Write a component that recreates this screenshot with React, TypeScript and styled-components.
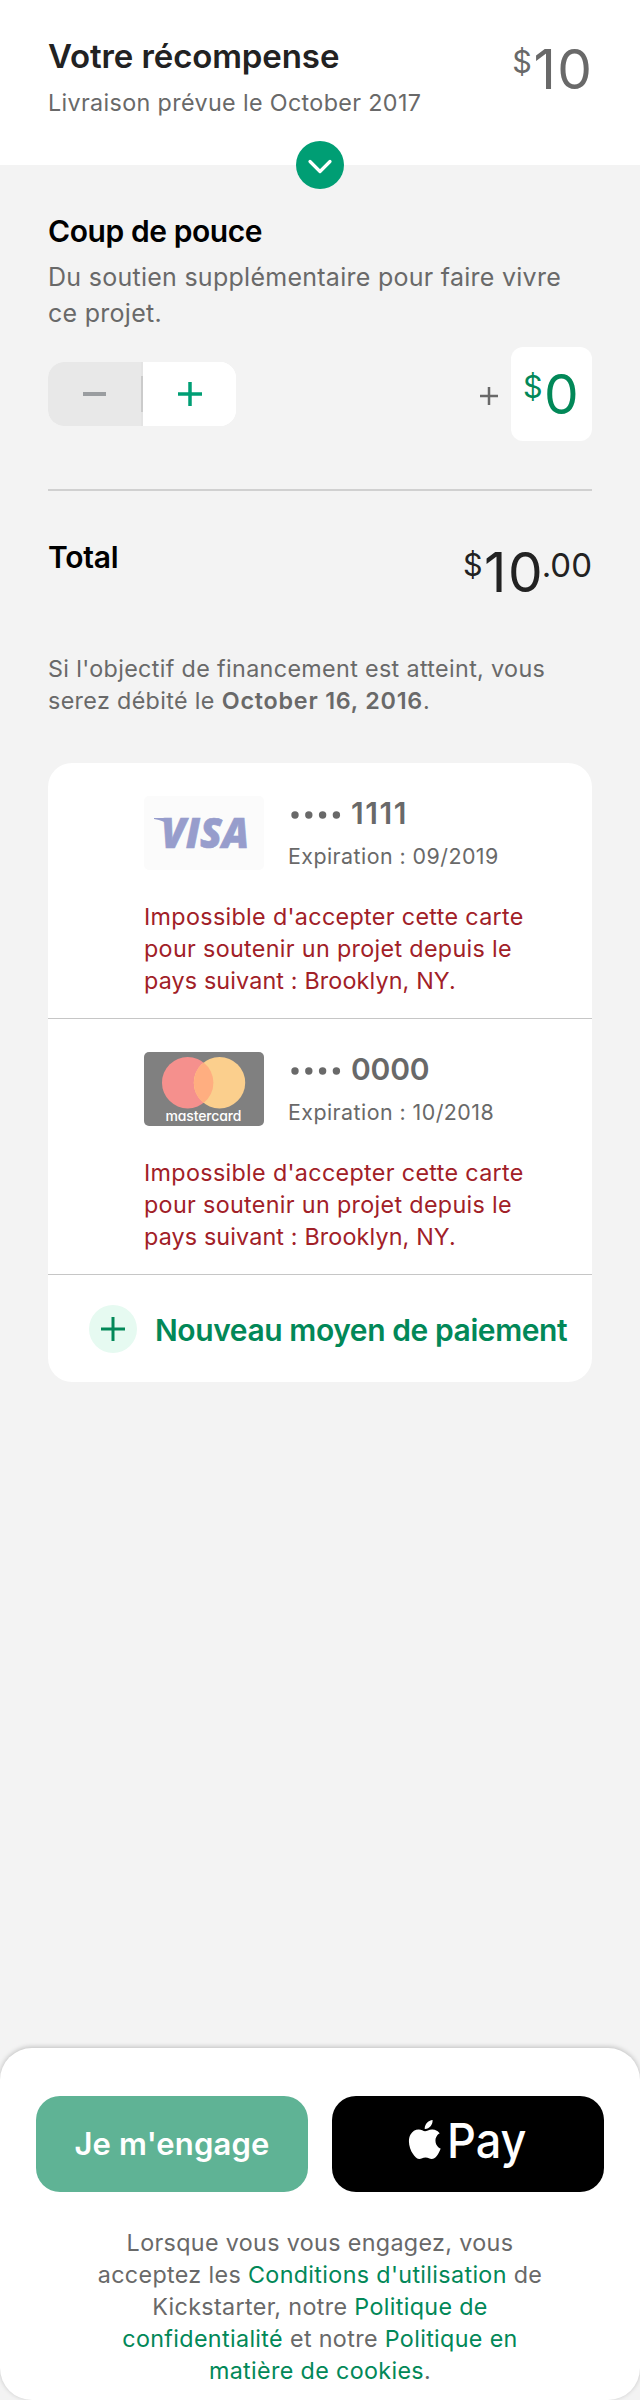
import React from 'react';
import styled, { createGlobalStyle } from 'styled-components';
import { SiApple } from 'react-icons/si';

const GlobalStyle = createGlobalStyle`
  * { box-sizing: border-box; }
  body { margin: 0; background: #f3f3f3; }
`;

const Page = styled.main`
  display: flex;
  flex-direction: column;
  width: 640px;
  height: 2400px;
  background: #f3f3f3;
  font-family: Inter, 'Liberation Sans', sans-serif;
  color: #696969;
`;

const Text = styled.p<{ $size: number; $line: number; $spacing?: number; $weight?: number; $color?: string }>`
  margin: 0;
  white-space: nowrap;
  font-size: ${(p) => p.$size}px;
  line-height: ${(p) => p.$line}px;
  letter-spacing: ${(p) => p.$spacing ?? 0}px;
  font-weight: ${(p) => p.$weight ?? 400};
  color: ${(p) => p.$color ?? '#696969'};
`;

const Header = styled.header`
  position: relative;
  display: flex;
  justify-content: space-between;
  height: 165px;
  padding: 36px 49px 0 48px;
  background: #fff;
`;

const HeaderText = styled.div`
  display: flex;
  flex-direction: column;
  gap: 13px;
`;

const Expand = styled.button`
  position: absolute;
  left: 296px;
  bottom: -24px;
  width: 48px;
  height: 48px;
  padding: 0;
  border: 0;
  border-radius: 50%;
  background: #009e74;
`;

const Amount = styled.div<{ $color: string; $top: number }>`
  display: flex;
  align-items: flex-start;
  padding-top: ${(p) => p.$top}px;
  color: ${(p) => p.$color};
`;

const Currency = styled.span`
  margin: 5px 1.5px 0 0;
  font-size: 30.5px;
  line-height: 30px;
`;

const Whole = styled.span`
  margin-right: -2.5px;
  font-size: 55px;
  line-height: 55px;
  letter-spacing: 1.5px;
`;

const Cents = styled.span`
  margin-top: 4px;
  font-size: 33px;
  line-height: 33px;
`;

const Body = styled.section`
  padding: 48px 48px 0;
`;

const Description = styled.div`
  padding: 10px 0 16px;
`;

const ControlRow = styled.div`
  display: flex;
  align-items: center;
  justify-content: space-between;
  height: 94px;
`;

const Stepper = styled.div`
  display: flex;
  width: 188px;
  height: 64px;
  border-radius: 16px;
  overflow: hidden;
  background: #fff;
`;

const StepButton = styled.button<{ $off?: boolean }>`
  display: flex;
  align-items: center;
  justify-content: center;
  flex: 1;
  padding: 0;
  border: 0;
  background: ${(p) => (p.$off ? '#e8e8e8' : '#fff')};
`;

const StepDivider = styled.span`
  align-self: center;
  width: 2px;
  height: 36px;
  background: #cbcbcb;
  box-shadow: 0 -36px #e4e4e4, 0 36px #e4e4e4;
`;

const Bonus = styled.div`
  display: flex;
  align-items: center;
  gap: 13px;
`;

const PlusSign = styled.span`
  display: flex;
  padding-top: 4px;
`;

const BonusBox = styled.div`
  width: 81px;
  height: 94px;
  padding-left: 12px;
  border-radius: 12px;
  background: #fff;
`;

const Rule = styled.hr`
  height: 2px;
  margin: 48px 0;
  border: 0;
  background: #d0d0d0;
`;

const TotalRow = styled.div`
  display: flex;
  justify-content: space-between;
  height: 114px;
`;

const ChargeDate = styled.strong`
  font-weight: 600;
  letter-spacing: 0.8px;
`;

const Cards = styled.div`
  height: 619px;
  margin-top: 46px;
  border-radius: 24px;
  overflow: hidden;
  background: #fff;
`;

const CardRow = styled.article`
  height: 256px;
  padding: 33px 0 0 96px;
  border-bottom: 1px solid #c6c6c6;
`;

const CardHead = styled.div`
  display: flex;
  gap: 24px;
  height: 74px;
  margin-bottom: 31px;
`;

const CardText = styled.div`
  display: flex;
  flex-direction: column;
  gap: 12px;
  margin-top: -1px;
`;

const CardNumber = styled.div`
  display: flex;
  align-items: center;
  gap: 10px;
  height: 36px;
  padding-left: 3px;
`;

const Dots = styled.svg`
  display: block;
  margin-top: 3px;
`;

const NewMethod = styled.button`
  display: flex;
  align-items: center;
  gap: 18px;
  width: 100%;
  height: 107px;
  padding: 0 0 0 41px;
  border: 0;
  background: transparent;
  font-family: inherit;
`;

const NewLabel = styled(Text)`
  padding-top: 3px;
`;

const AddBadge = styled.span`
  display: flex;
  align-items: center;
  justify-content: center;
  width: 48px;
  height: 48px;
  border-radius: 50%;
  background: #e6faf1;
`;

const Footer = styled.footer`
  height: 352px;
  margin-top: auto;
  padding: 48px 36px 0;
  border-radius: 32px;
  background: #fff;
  box-shadow: 0 -1px 5px rgba(0, 0, 0, 0.22);
`;

const Actions = styled.div`
  display: grid;
  grid-template-columns: 1fr 1fr;
  gap: 24px;
  margin-bottom: 35px;
`;

const Action = styled.button<{ $bg: string }>`
  display: flex;
  align-items: center;
  justify-content: center;
  height: 96px;
  padding: 0;
  border: 0;
  border-radius: 24px;
  color: #fff;
  background: ${(p) => p.$bg};
  font-family: inherit;
`;

const Legal = styled(Text)`
  text-align: center;
`;

const Link = styled.a`
  color: #028858;
`;

const Cross = ({ size, stroke, color }: { size: number; stroke: number; color: string }) => (
  <svg width={size} height={size} viewBox={`0 0 ${size} ${size}`} stroke={color} strokeWidth={stroke}>
    <path d={`M0 ${size / 2}H${size}M${size / 2} 0V${size}`} />
  </svg>
);

const Visa = () => (
  <svg width="120" height="74" viewBox="0 0 120 74">
    <rect width="120" height="74" rx="5" fill="#fbfbfb" />
    <path d="M10 22H24L26 31C22 26 17 24 10 23Z" fill="#979dcc" />
    <text x="17" y="52" fill="#979dcc" stroke="#979dcc" strokeWidth="0.6" fontFamily="'Open Sans', sans-serif" fontWeight="800" fontStyle="italic" fontSize="42.5" textLength="88" lengthAdjust="spacingAndGlyphs">VISA</text>
  </svg>
);

const Mastercard = () => (
  <svg width="120" height="74" viewBox="0 0 120 74">
    <rect width="120" height="74" rx="5" fill="#808080" />
    <circle cx="43.7" cy="30.7" r="25.7" fill="#f5908d" />
    <circle cx="75.5" cy="30.7" r="25.7" fill="#fbcf8d" />
    <path d="M59.6 10.5A25.7 25.7 0 0 1 59.6 50.9A25.7 25.7 0 0 1 59.6 10.5Z" fill="#ffae80" />
    <text x="21.5" y="69" fill="#fff" fontFamily="Inter, sans-serif" fontWeight="500" fontSize="14" textLength="76" style={{ fontFeatureSettings: "'cv11'" }}>mastercard</text>
  </svg>
);

const ApplePay = () => (
  <svg width="272" height="96" viewBox="0 0 272 96" fill="#fff">
    <SiApple x="73.3" y="24" size={39} />
    <text x="115" y="62.3" fontFamily="Inter, sans-serif" fontWeight="450" fontSize="48.5" textLength="79.5" lengthAdjust="spacingAndGlyphs">Pay</text>
  </svg>
);

type PaymentCardProps = { logo: React.ReactNode; digits: string; digitSpacing: number; expiry: string };

const PaymentCard = ({ logo, digits, digitSpacing, expiry }: PaymentCardProps) => (
  <CardRow>
    <CardHead>
      {logo}
      <CardText>
        <CardNumber>
          <Dots width="50" height="8" fill="#696969">
            {[4, 17.8, 31.6, 45.4].map((x) => <circle key={x} cx={x} cy="4" r="3.7" />)}
          </Dots>
          <Text as="span" $size={30} $line={36} $weight={600} $spacing={digitSpacing}>{digits}</Text>
        </CardNumber>
        <Text $size={21.4} $line={26} $spacing={0.45}>Expiration : {expiry}</Text>
      </CardText>
    </CardHead>
    <Text $size={23.3} $line={32} $spacing={0.34} $color="#a12027">
      Impossible d'accepter cette carte<br />pour soutenir un projet depuis le
    </Text>
    <Text $size={23.3} $line={32} $spacing={0.15} $color="#a12027">pays suivant : Brooklyn, NY.</Text>
  </CardRow>
);

export default function App() {
  return (
    <Page>
      <GlobalStyle />
      <Header>
        <HeaderText>
          <Text as="h1" $size={33} $line={40} $weight={600} $spacing={-0.1} $color="#222">Votre récompense</Text>
          <Text $size={23.3} $line={28} $spacing={0.36}>Livraison prévue le October 2017</Text>
        </HeaderText>
        <Amount $color="#696969" $top={6}><Currency>$</Currency><Whole>10</Whole></Amount>
        <Expand>
          <svg width="48" height="48" fill="none" stroke="#fff" strokeWidth="3.2" strokeLinecap="round" strokeLinejoin="round">
            <path d="M14 20.5L24 30.5L34 20.5" />
          </svg>
        </Expand>
      </Header>

      <Body>
        <Text as="h2" $size={30} $line={36} $weight={600} $spacing={-0.42} $color="#000">Coup de pouce</Text>
        <Description>
          <Text $size={25} $line={36} $spacing={0.27}>Du soutien supplémentaire pour faire vivre<br />ce projet.</Text>
        </Description>
        <ControlRow>
          <Stepper>
            <StepButton $off>
              <svg width="23" height="4"><rect width="23" height="4" fill="#9a9da0" /></svg>
            </StepButton>
            <StepDivider />
            <StepButton><Cross size={24} stroke={3.5} color="#009e74" /></StepButton>
          </Stepper>
          <Bonus>
            <PlusSign><Cross size={18} stroke={2.5} color="#696969" /></PlusSign>
            <BonusBox>
              <Amount $color="#028858" $top={20}><Currency>$</Currency><Whole>0</Whole></Amount>
            </BonusBox>
          </Bonus>
        </ControlRow>
        <Rule />
        <TotalRow>
          <Text as="h2" $size={30} $line={36} $weight={600} $spacing={-0.25} $color="#000">Total</Text>
          <Amount $color="#222" $top={6}><Currency>$</Currency><Whole>10</Whole><Cents>.00</Cents></Amount>
        </TotalRow>
        <Text $size={23.3} $line={32} $spacing={0.355}>
          Si l'objectif de financement est atteint, vous<br />serez débité le <ChargeDate>October 16, 2016</ChargeDate>.
        </Text>
        <Cards>
          <PaymentCard logo={<Visa />} digits="1111" digitSpacing={1.6} expiry="09/2019" />
          <PaymentCard logo={<Mastercard />} digits="0000" digitSpacing={-0.2} expiry="10/2018" />
          <NewMethod>
            <AddBadge><Cross size={24} stroke={3} color="#028858" /></AddBadge>
            <NewLabel as="span" $size={30} $line={36} $weight={600} $spacing={-0.42} $color="#028858">Nouveau moyen de paiement</NewLabel>
          </NewMethod>
        </Cards>
      </Body>

      <Footer>
        <Actions>
          <Action $bg="#5fb395">
            <Text as="span" $size={31} $line={38} $weight={600} $spacing={0.15} $color="#fff">Je m'engage</Text>
          </Action>
          <Action $bg="#000" aria-label="Apple Pay">
            <ApplePay />
          </Action>
        </Actions>
        <Legal $size={23.3} $line={32} $spacing={0.35}>
          Lorsque vous vous engagez, vous<br />acceptez les <Link>Conditions d'utilisation</Link> de<br />
          Kickstarter, notre <Link>Politique de<br />confidentialité</Link> et notre <Link>Politique en<br />matière de cookies</Link>.
        </Legal>
      </Footer>
    </Page>
  );
}
